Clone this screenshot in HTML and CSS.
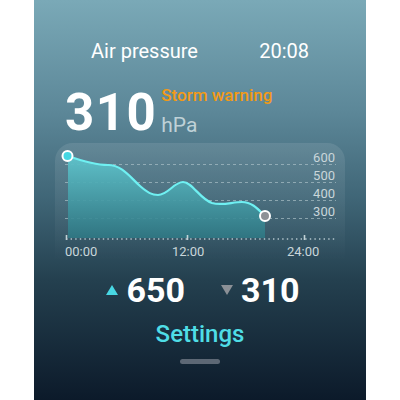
FILE: index.html
```html
<!DOCTYPE html>
<html lang="en">
<head>
    <meta charset="UTF-8">
    <meta name="viewport" content="width=device-width, initial-scale=1.0">
    <title>Air pressure</title>
    <link rel="stylesheet" href="styles.css">
</head>
<body>
    <div class="screen">
        <!-- 상단 제목 + 시간 -->
        <div class="top">
            <span class="title">Air pressure</span>
            <span class="time">20:08</span>
        </div>

        <!-- 현재 기압 -->
        <div class="now">
            <span class="val">310</span>
            <div class="side">
                <span class="warn">Storm warning</span>
                <span class="unit">hPa</span>
            </div>
        </div>

        <!-- 그래프 카드 -->
        <div class="card">
            <svg class="chart" width="290" height="118" viewBox="55 142 290 118">
                <defs>
                    <linearGradient id="fill" x1="0" y1="0" x2="0" y2="1">
                        <stop offset="0" stop-color="#5fc4cc" stop-opacity="0.95"/>
                        <stop offset="1" stop-color="#2f7884" stop-opacity="0.9"/>
                    </linearGradient>
                </defs>
                <g stroke="#a9bfc6" stroke-opacity="0.7" stroke-width="1" stroke-dasharray="3 3">
                    <line x1="65" y1="163.5" x2="336" y2="163.5"/>
                    <line x1="65" y1="181.5" x2="336" y2="181.5"/>
                    <line x1="65" y1="199.5" x2="336" y2="199.5"/>
                    <line x1="65" y1="217.5" x2="336" y2="217.5"/>
                </g>
                <path d="M68 155 C88 162 100 164 108 164 C122 164 130 176 140 185 C148 192 152 194 158 194 C168 194 174 181 183 181 C192 181 200 198 212 202 C222 205 232 201 242 201 C252 201 258 208 265 215 L265 237 L68 237 Z" fill="url(#fill)"/>
                <path d="M68 155 C88 162 100 164 108 164 C122 164 130 176 140 185 C148 192 152 194 158 194 C168 194 174 181 183 181 C192 181 200 198 212 202 C222 205 232 201 242 201 C252 201 258 208 265 215" fill="none" stroke="#6ff0f2" stroke-width="2.2"/>
                <g stroke="#b4c6cc" stroke-opacity="0.75" stroke-width="2" stroke-dasharray="1.4 3.2">
                    <line x1="66" y1="238" x2="336" y2="238"/>
                </g>
                <g stroke="#c2d2d6" stroke-width="1.6">
                    <line x1="66.5" y1="234" x2="66.5" y2="239"/>
                    <line x1="187.5" y1="234" x2="187.5" y2="239"/>
                    <line x1="304.5" y1="234" x2="304.5" y2="239"/>
                </g>
                <circle cx="67.5" cy="155" r="5" fill="#45d6e2" stroke="#fff" stroke-width="2"/>
                <circle cx="265" cy="215" r="5" fill="#8d9196" stroke="#fff" stroke-width="2"/>
                <g class="ylab" text-anchor="end">
                    <text x="335" y="161">600</text>
                    <text x="335" y="179">500</text>
                    <text x="335" y="197">400</text>
                    <text x="335" y="215">300</text>
                </g>
                <g class="xlab">
                    <text x="65" y="255">00:00</text>
                    <text x="172" y="255">12:00</text>
                    <text x="287" y="255">24:00</text>
                </g>
            </svg>
        </div>

        <!-- 최고/최저 -->
        <div class="range">
            <div class="item">
                <span class="tri up"></span>
                <span class="num">650</span>
            </div>
            <div class="item">
                <span class="tri down"></span>
                <span class="num">310</span>
            </div>
        </div>

        <div class="settings">Settings</div>
        <div class="bar"></div>
    </div>
</body>
</html>
```

FILE: styles.css
```css
/* 초기화 */
html, body{
    margin: 0;
    padding: 0;
    background: #fff;
}

/* 화면 */
.screen{
    width: 332px;
    height: 400px;
    margin: 0 auto;
    display: flex;
    flex-direction: column;
    background: linear-gradient(to bottom, #7aa9b7 0%, #5c8798 28%, #3f6576 50%, #24404f 70%, #0c1a2a 100%);
    font-family: Roboto, "Noto Sans", sans-serif;
    color: #fff;
}

/* 상단 */
.top{
    display: flex;
    justify-content: space-between;
    padding: 39px 57px 0 57px;
    font-size: 20px;
    line-height: 24px;
}

/* 현재값 */
.now{
    display: flex;
    align-items: flex-end;
    padding: 26px 0 0 31px;
}
.val{
    font-size: 51px;
    font-weight: bold;
    line-height: 46px;
    letter-spacing: 1.5px;
}
/* 위로 살짝 올림 - 줄 높이는 그대로 유지 */
.side{
    display: flex;
    flex-direction: column;
    margin: -4px 0 0 4px;
}
.warn{
    color: #f29a16;
    font-size: 17px;
    font-weight: 500;
    line-height: 20px;
    margin-bottom: 9px;
}
.unit{
    color: #bfd1d7;
    font-size: 21px;
    line-height: 22px;
}

/* 그래프 카드 */
.card{
    margin: 7px 0 0 21px;
    width: 290px;
    height: 118px;
    border-radius: 18px 18px 0 0;
    background: linear-gradient(to bottom, rgba(255,255,255,0.1), rgba(255,255,255,0.04) 70%, rgba(255,255,255,0));
}
.chart{
    display: block;
}
.ylab, .xlab{
    font-family: Roboto, "Noto Sans", sans-serif;
    font-size: 13px;
    fill: #c9d6da;
}

/* 최고 최저 */
.range{
    display: flex;
    justify-content: center;
    gap: 36px;
    margin-top: 11px;
    padding-left: 6px;
}
.item{
    display: flex;
    align-items: center;
    gap: 8px;
}
.tri{
    width: 0;
    height: 0;
    border-left: 6px solid transparent;
    border-right: 6px solid transparent;
}
.tri.up{
    border-bottom: 10px solid #48d8e4;
}
.tri.down{
    border-top: 10px solid #8b9096;
}
.num{
    font-size: 34px;
    font-weight: bold;
    line-height: 36px;
}

/* 설정 */
.settings{
    margin-top: 12px;
    text-align: center;
    color: #4fdde6;
    font-size: 24px;
    font-weight: 500;
    line-height: 28px;
}
.bar{
    width: 40px;
    height: 5px;
    margin: 11px auto 0;
    border-radius: 3px;
    background: #5d6875;
}
```
